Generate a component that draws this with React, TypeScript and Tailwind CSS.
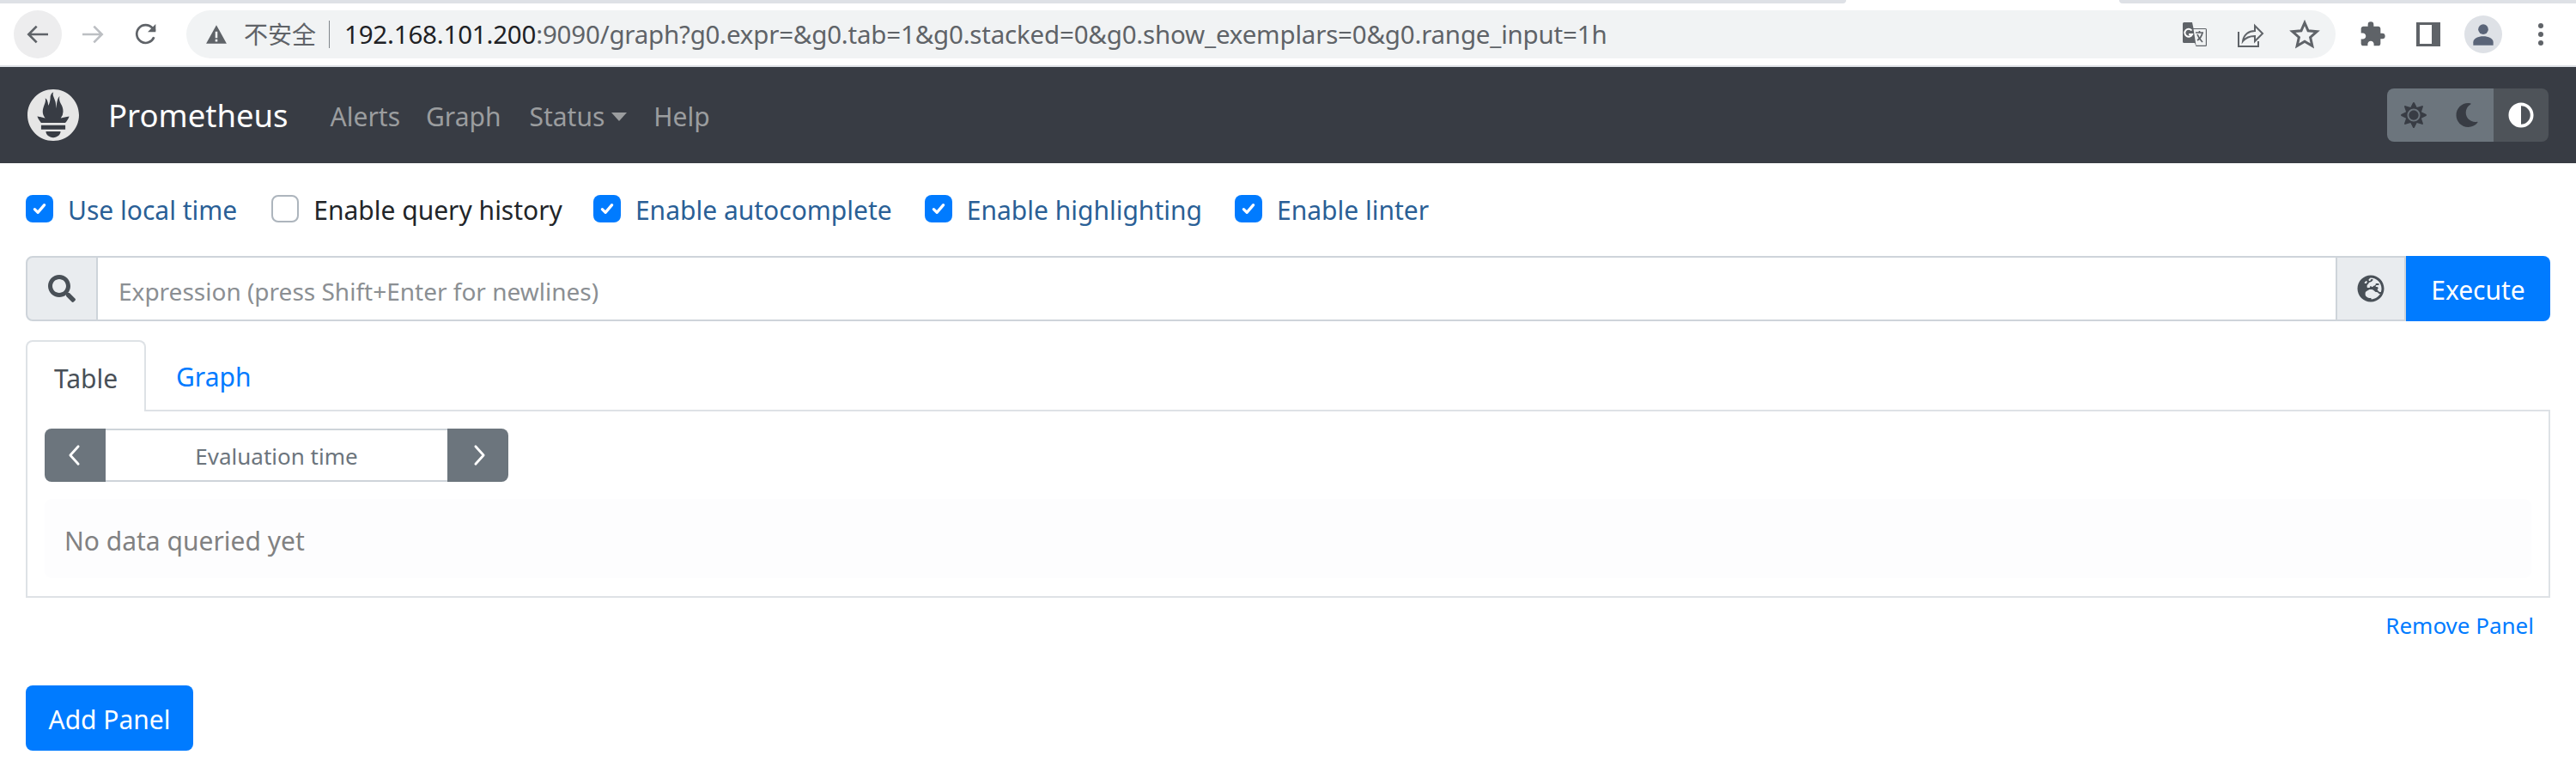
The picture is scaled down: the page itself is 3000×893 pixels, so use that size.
import { FaAdjust, FaGlobeEurope, FaMoon, FaSearch, FaSun } from "react-icons/fa";
import { MdExtension } from "react-icons/md";
import { SiPrometheus } from "react-icons/si";

const font = { fontFamily: '"Noto Sans", "Noto Sans CJK SC", sans-serif' };

function Check({ on, label, left }: { on: boolean; label: string; left: string }) {
  return (
    <label className={`flex items-center ${left}`}>
      {on ? (
        <span className="flex h-8 w-8 items-center justify-center rounded-lg bg-[#007bff]">
          <svg viewBox="0 0 16 16" className="h-5 w-5" fill="none" stroke="white" strokeWidth="2.6" strokeLinecap="round" strokeLinejoin="round">
            <path d="M3.5 8.5 6.5 11.5 12.5 4.5" />
          </svg>
        </span>
      ) : (
        <span className="h-8 w-8 rounded-lg border-2 border-[#adb5bd] bg-white" />
      )}
      <span className={`ml-[17px] pt-[3px] text-[30px] leading-8 ${on ? "text-[#2a5f96]" : "text-[#212529]"}`}>{label}</span>
    </label>
  );
}

function BrowserBar() {
  return (
    <div className="h-[78px] border-b-2 border-[#dee1e6] bg-white">
      <div className="flex h-[4px] justify-between">
        <div className="w-[2150px] rounded-br-md bg-[#dee1e6]" />
        <div className="w-[532px] rounded-bl-md bg-[#dee1e6]" />
      </div>
      <div className="mt-2 flex h-14 items-center">
        <div className="ml-4 flex h-14 w-14 items-center justify-center rounded-full bg-[#ededee]">
          <svg viewBox="0 0 24 24" className="h-8 w-8" fill="none" stroke="#5f6368" strokeWidth="2">
            <path d="M21 12H4M11 5l-7 7 7 7" />
          </svg>
        </div>
        <svg viewBox="0 0 24 24" className="ml-[20px] h-8 w-8" fill="none" stroke="#bcbfc3" strokeWidth="2">
          <path d="M3 12h17M13 5l7 7-7 7" />
        </svg>
        <svg viewBox="0 0 24 24" className="ml-[30px] h-8 w-8" fill="none" stroke="#5f6368" strokeWidth="2">
          <path d="M19 14.5A7.8 7.8 0 1 1 17.6 6.5L20 9" />
          <path d="M20.5 3v7h-7" fill="#5f6368" stroke="none" />
        </svg>
        <div className="ml-[31px] flex h-14 w-[2503px] items-center rounded-full bg-[#f1f3f4]">
          <svg viewBox="0 0 24 24" className="ml-[22px] h-[26px] w-[26px]" fill="#5f6368">
            <path d="M12 2 23 22H1Zm-1.2 7v7h2.4V9Zm0 8.4v2.4h2.4v-2.4Z" />
          </svg>
          <span className="ml-[19px] text-[28px] text-[#5f6368]">不安全</span>
          <span className="ml-[15px] h-8 w-px bg-[#80868b]" />
          <span className="ml-[17px] whitespace-nowrap text-[29.5px] tracking-[-0.2px] text-[#202124]">
            192.168.101.200<span className="text-[#5f6368]">:9090/graph?g0.expr=&amp;g0.tab=1&amp;g0.stacked=0&amp;g0.show_exemplars=0&amp;g0.range_input=1h</span>
          </span>
          <svg viewBox="0 0 28 28" className="ml-auto h-7 w-7">
            <path d="M0 1.500A1.500 1.500 0 0 1 1.500 0H11l1.500 7h14A1.500 1.500 0 0 1 28 8.500v18a1.500 1.500 0 0 1-1.500 1.500h-11l-1.500-4H1.500A1.500 1.500 0 0 1 0 22.500Z" fill="#5f6368" />
            <path d="M12.500 8H26.800V26.800H15.500Z" fill="#f1f3f4" />
            <path d="M10.500 9.500A4.500 4.500 0 1 0 11 14H7" fill="none" stroke="white" strokeWidth="2" />
            <path d="M15 12h9M19.500 10v2M23 12c-1 5-3 7-6 9M17 14c1 3 3 6 6 9" fill="none" stroke="#5f6368" strokeWidth="1.700" />
          </svg>
          <svg viewBox="0 0 32 32" className="ml-[35px] h-8 w-8" fill="none" stroke="#5f6368" strokeWidth="2">
            <path d="M2 13v17h23v-6M7 24c1-8 7-12 14-12V6l9 9-9 9v-6c-6 0-10 1-14 6Z" />
          </svg>
          <svg viewBox="0 0 24 24" className="ml-[29px] mr-[18px] h-9 w-9" fill="none" stroke="#5f6368" strokeWidth="2">
            <path d="m12 3 2.700 6.200 6.800.6-5.100 4.500 1.500 6.700-5.900-3.500L6.100 21l1.500-6.700L2.500 9.800l6.800-.6Z" />
          </svg>
        </div>
        <MdExtension className="ml-[27px] h-8 w-8 text-[#5f6368]" />
        <div className="ml-[35px] h-7 w-7 border-y-[3px] border-l-[4px] border-r-[10px] border-[#5f6368] bg-white" />
        <div className="ml-[28px] flex h-11 w-11 items-center justify-center rounded-full bg-[#dee1e6]">
          <svg viewBox="0 0 24 24" className="h-7 w-7" fill="#5a6478">
            <circle cx="12" cy="7" r="5" />
            <path d="M2 23v-3c0-4 5-6 10-6s10 2 10 6v3Z" />
          </svg>
        </div>
        <div className="ml-[42px] flex flex-col gap-[4px]">
          <span className="h-[6px] w-[6px] rounded-full bg-[#5f6368]" />
          <span className="h-[6px] w-[6px] rounded-full bg-[#5f6368]" />
          <span className="h-[6px] w-[6px] rounded-full bg-[#5f6368]" />
        </div>
      </div>
    </div>
  );
}

function NavBar() {
  return (
    <nav className="flex h-[112px] items-center bg-[#383c44] pl-8 pr-8">
      <div className="flex h-[60px] w-[60px] items-center justify-center">
        <SiPrometheus className="h-[60px] w-[60px] text-[#e6e6e6]" />
      </div>
      <span className="ml-[34px] pt-[1px] text-[36.5px] text-white">Prometheus</span>
      <div className="flex items-center pt-[3px] text-[30px] text-[#9b9d9f]">
        <span className="ml-[49px]">Alerts</span>
        <span className="ml-[30px]">Graph</span>
        <span className="ml-[33px]">Status</span>
        <span className="ml-2 h-0 w-0 border-x-[9px] border-t-[10px] border-x-transparent border-t-[#9b9d9f]" />
        <span className="ml-[31px]">Help</span>
      </div>
      <div className="ml-auto flex h-[62px] w-[188px] overflow-hidden rounded-lg">
        <div className="flex w-[62px] items-center justify-center bg-[#6c757d]">
          <FaSun className="h-[30px] w-[30px] text-[#383c44]" />
        </div>
        <div className="flex w-[62px] items-center justify-center bg-[#6c757d]">
          <FaMoon className="h-7 w-7 text-[#383c44]" />
        </div>
        <div className="flex w-[64px] items-center justify-center bg-[#4e5359]">
          <FaAdjust className="h-[30px] w-[30px] text-white" />
        </div>
      </div>
    </nav>
  );
}

export default function App() {
  return (
    <div className="h-[893px] overflow-hidden bg-white" style={font}>
      <BrowserBar />
      <NavBar />
      <main className="px-[30px]">
        <div className="flex h-[108px] items-center pb-[2px]">
          <Check on label="Use local time" left="" />
          <Check on={false} label="Enable query history" left="ml-[40px]" />
          <Check on label="Enable autocomplete" left="ml-[36px]" />
          <Check on label="Enable highlighting" left="ml-[38px]" />
          <Check on label="Enable linter" left="ml-[38px]" />
        </div>

        <div className="flex h-[76px] w-[2940px]">
          <div className="flex w-[84px] items-center justify-center rounded-l-lg border-2 border-[#ced4da] bg-[#e9ecef]">
            <FaSearch className="h-8 w-8 text-[#495057]" />
          </div>
          <div className="flex flex-1 items-center border-y-2 border-[#ced4da] pl-6 pt-[5px] text-[28px] text-[#8b8f93]">
            Expression (press Shift+Enter for newlines)
          </div>
          <div className="flex w-[82px] items-center justify-center border-2 border-[#ced4da] bg-[#e9ecef]">
            <FaGlobeEurope className="h-8 w-8 text-[#495057]" />
          </div>
          <button className="w-[168px] rounded-r-lg bg-[#007bff] pt-[3px] text-[30px] text-white">Execute</button>
        </div>

        <div className="mt-5 flex h-[85px] border-b-2 border-[#dee2e6] pt-[2px]">
          <div className="mb-[-2px] flex h-[83px] w-[140px] items-center justify-center rounded-t-lg border-2 border-b-0 border-[#dee2e6] bg-white pt-[3px] text-[30px] text-[#495057]">
            Table
          </div>
          <div className="ml-[35px] flex items-center pt-[3px] text-[30px] text-[#007bff]">Graph</div>
        </div>

        <div className="h-[217px] border-2 border-t-0 border-[#dee2e6] px-5 pt-5">
          <div className="flex h-[62px] w-[540px]">
            <div className="flex w-[71px] items-center justify-center rounded-l-lg bg-[#6c757d] pr-[3px]">
              <svg viewBox="0 0 16 28" className="h-[26px] w-[15px]" fill="none" stroke="white" strokeWidth="3" strokeLinecap="round" strokeLinejoin="round">
                <path d="M13 3 3 14l10 11" />
              </svg>
            </div>
            <div className="flex flex-1 items-center justify-center border-y-2 border-[#ced4da] pt-[3px] text-[26px] text-[#6c757d]">
              Evaluation time
            </div>
            <div className="flex w-[71px] items-center justify-center rounded-r-lg bg-[#6c757d] pl-[3px]">
              <svg viewBox="0 0 16 28" className="h-[26px] w-[15px]" fill="none" stroke="white" strokeWidth="3" strokeLinecap="round" strokeLinejoin="round">
                <path d="m3 3 10 11L3 25" />
              </svg>
            </div>
          </div>
          <div className="mt-5 flex h-[92px] items-center rounded-lg bg-[#fdfdfe] pl-[23px] pt-[4px] text-[30px] text-[#818182]">
            No data queried yet
          </div>
        </div>

        <div className="flex h-[64px] items-center justify-end pr-[19px] text-[26px] text-[#007bff]">Remove Panel</div>

        <button className="mt-[38px] h-[76px] w-[195px] rounded-lg bg-[#007bff] pt-[3px] text-[30px] text-white">Add Panel</button>
      </main>
    </div>
  );
}
